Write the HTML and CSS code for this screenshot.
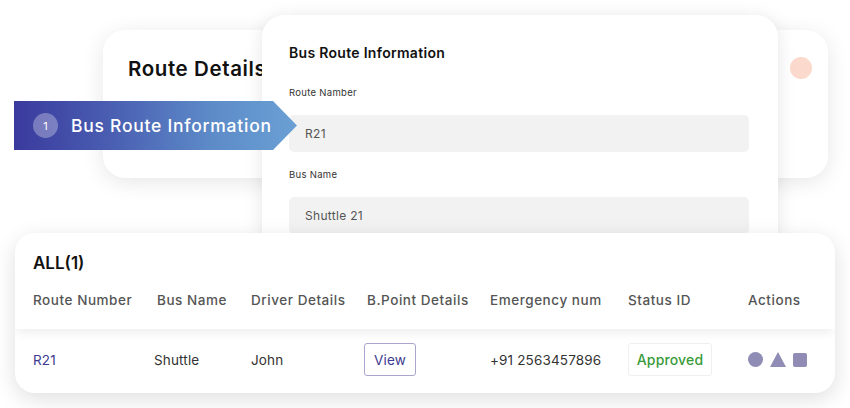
FILE: index.html
```html
<!DOCTYPE html>
<html>
<head>
<meta charset="utf-8">
<link rel="stylesheet" href="styles.css">
</head>
<body>
<div class="stage">
  <div class="card back-card">
    <h2 class="back-title">Route Details</h2>
    <span class="dot"></span>
  </div>

  <div class="card form-card">
    <h3 class="form-title">Bus Route Information</h3>
    <div class="field">
      <label class="label">Route Namber</label>
      <div class="input">R21</div>
    </div>
    <div class="field">
      <label class="label">Bus Name</label>
      <div class="input">Shuttle 21</div>
    </div>
  </div>

  <div class="banner">
    <span class="step">1</span>
    <span class="banner-text">Bus Route Information</span>
  </div>

  <div class="card table-card">
    <div class="table-head">
      <div class="all">ALL(1)</div>
      <div class="row head-row">
        <div>Route Number</div>
        <div>Bus Name</div>
        <div>Driver Details</div>
        <div>B.Point Details</div>
        <div>Emergency num</div>
        <div>Status ID</div>
        <div>Actions</div>
      </div>
    </div>
    <div class="row data-row">
      <div class="route">R21</div>
      <div class="shift">Shuttle</div>
      <div>John</div>
      <div class="shift"><span class="view">View</span></div>
      <div>+91 2563457896</div>
      <div><span class="status">Approved</span></div>
      <div class="actions">
        <span class="ic circle"></span>
        <svg class="ic" width="16" height="15" viewBox="0 0 16 15"><polygon points="8,0 16,15 0,15" fill="#8f8cb5"/></svg>
        <span class="ic square"></span>
      </div>
    </div>
  </div>
</div>
</body>
</html>
```

FILE: styles.css
```css
* { box-sizing: border-box; }
html, body { margin: 0; padding: 0; background: #fff; }
body {
  font-family: Inter, "Open Sans", "Liberation Sans", sans-serif;
  color: #222;
  width: 850px;
  height: 408px;
  overflow: hidden;
}
.stage { position: relative; width: 850px; height: 408px; }

.card {
  position: absolute;
  background: #fff;
  border-radius: 22px;
  box-shadow: 0 4px 22px rgba(0, 0, 0, 0.10);
}

.back-card {
  left: 103px;
  top: 30px;
  width: 725px;
  height: 148px;
  padding: 26px 0 0 25px;
}
.back-title {
  margin: 0;
  font-size: 20.5px;
  font-weight: 600;
  line-height: 26px;
  color: #111;
  letter-spacing: 0.6px;
}
.dot {
  position: absolute;
  left: 687px;
  top: 27px;
  width: 22px;
  height: 22px;
  border-radius: 50%;
  background: #fcd9cd;
}

.form-card {
  left: 262px;
  top: 15px;
  width: 516px;
  height: 240px;
  padding: 28px 29px 0 27px;
  box-shadow: 0 2px 18px rgba(0, 0, 0, 0.10);
}
.form-title {
  margin: 0 0 23px;
  font-size: 14px;
  font-weight: 600;
  line-height: 20px;
  color: #111;
  letter-spacing: 0.3px;
}
.field { display: flex; flex-direction: column; margin-bottom: 16px; }
.label {
  font-size: 9.5px;
  line-height: 14px;
  color: #333;
  margin-bottom: 15px;
  letter-spacing: 0.3px;
}
.input {
  height: 37px;
  border-radius: 5px;
  background: #f2f2f2;
  padding: 0 16px;
  display: flex;
  align-items: center;
  font-size: 12px;
  color: #555;
  letter-spacing: 0.3px;
}

.banner {
  position: absolute;
  left: 14px;
  top: 101px;
  width: 283px;
  height: 49px;
  clip-path: polygon(0 0, 259px 0, 283px 24.5px, 259px 49px, 0 49px);
  background: linear-gradient(90deg, #3a3a9d 0%, #4a5fb2 35%, #5d8bc8 70%, #6aa0d4 100%);
  display: flex;
  align-items: center;
  padding-left: 19px;
  gap: 13px;
}
.step {
  width: 25px;
  height: 25px;
  border-radius: 50%;
  background: rgba(255, 255, 255, 0.3);
  color: #fff;
  font-size: 11px;
  display: flex;
  align-items: center;
  justify-content: center;
}
.banner-text {
  color: #fff;
  font-size: 17.5px;
  font-weight: 500;
  letter-spacing: 0.75px;
}

.table-card {
  left: 15px;
  top: 233px;
  width: 820px;
  height: 160px;
  border-radius: 20px;
  overflow: hidden;
  box-shadow: 0 6px 22px rgba(0, 0, 0, 0.13);
}
.table-head {
  position: relative;
  z-index: 1;
  height: 96px;
  padding: 18px 0 0 18px;
  background: #fff;
  box-shadow: 0 6px 10px -2px rgba(0, 0, 0, 0.07);
}
.all {
  font-size: 17px;
  font-weight: 600;
  line-height: 24px;
  color: #111;
}
.row {
  display: grid;
  grid-template-columns: 124px 94px 116px 123px 138px 120px 1fr;
  align-items: center;
}
.head-row {
  margin-top: 15px;
  font-size: 13.5px;
  line-height: 20px;
  font-weight: 500;
  color: #555;
  letter-spacing: 0.55px;
  white-space: nowrap;
}
.data-row {
  margin-top: -96px;
  height: 160px;
  padding: 110px 0 0 18px;
  font-size: 13.5px;
  color: #333;
  letter-spacing: 0.15px;
  align-items: start;
}
.data-row > div { display: flex; align-items: center; height: 33px; }
.route { color: #3d3a8f; }
.shift { margin-left: -3px; }
.view {
  display: inline-flex;
  align-items: center;
  justify-content: center;
  width: 52px;
  height: 33px;
  border: 1px solid #a8a6cf;
  border-radius: 3px;
  color: #3d3a8f;
}
.status {
  display: inline-flex;
  align-items: center;
  justify-content: center;
  width: 84px;
  height: 33px;
  border: 1px solid #eef0ee;
  border-radius: 3px;
  color: #3a9a3a;
  font-size: 14px;
  font-weight: 500;
}
.actions { gap: 7px; }
.ic { display: block; }
.circle { width: 15px; height: 15px; border-radius: 50%; background: #8f8cb5; }
.square { width: 14px; height: 14px; border-radius: 2px; background: #8f8cb5; }
```
